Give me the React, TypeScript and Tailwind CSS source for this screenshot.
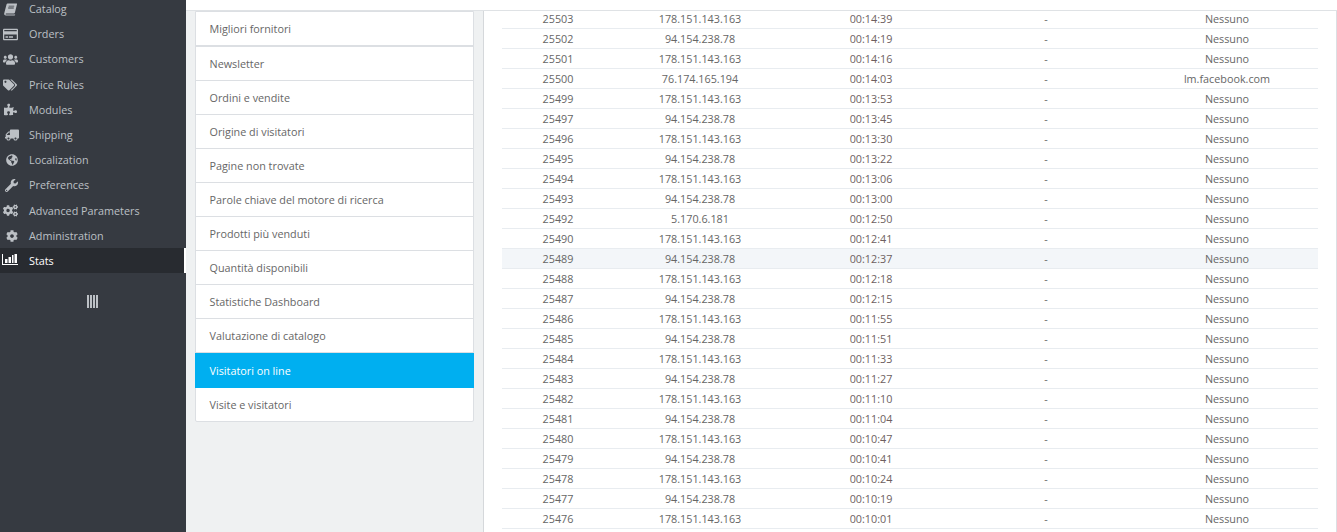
import React from 'react';
import {
  FaRegCreditCard,
  FaUsers,
  FaTags,
  FaPuzzlePiece,
  FaTruck,
  FaGlobeAmericas,
  FaWrench,
  FaCogs,
  FaCog,
} from 'react-icons/fa';

// FontAwesome 4 shapes that the icon package doesn't have
const BookIcon = ({ className }: { className?: string }) => (
  <svg viewBox="0 0 14 13" className={className} fill="currentColor">
    <path d="M4 0h9.4c.5 0 .7.4.6.8l-2.3 9.2c-.1.5-.5.8-1 .8H2.3c-.5 0-.7.5-.5.9.1.2.3.3.6.3h8.8l.9-.5-.4 1.1c-.1.3-.3.4-.6.4H2C.9 13 0 12 .2 10.8L2.7 1C2.9.4 3.4 0 4 0zm1 2.4v.9h6v-.9H5zm-.5 2v.9h6v-.9h-6z" />
  </svg>
);

const ChartIcon = ({ className }: { className?: string }) => (
  <svg viewBox="0 0 16 11" className={className} fill="currentColor">
    <path d="M0 0h1v10h15v1H0z" />
    <path d="M3 5h2.5v4H3zM6.5 3H9v6H6.5zM10 1h1.5v8H10zM12.5 0H15v9h-2.5z" />
  </svg>
);

const BarsIcon = ({ className }: { className?: string }) => (
  <svg viewBox="0 0 11 13" className={className} fill="currentColor">
    <path d="M0 0h2v13H0zM3 0h2v13H3zM6 0h2v13H6zM9 0h2v13H9z" />
  </svg>
);

const menu = [
  { label: 'Catalog', icon: BookIcon, iconClass: 'h-[13px] w-[13px] ml-[1px]' },
  { label: 'Orders', icon: FaRegCreditCard, iconClass: 'h-[15px] w-[15px]' },
  { label: 'Customers', icon: FaUsers, iconClass: 'h-[15px] w-[15px]' },
  { label: 'Price Rules', icon: FaTags, iconClass: 'h-[14px] w-[14px]' },
  { label: 'Modules', icon: FaPuzzlePiece, iconClass: 'h-[13px] w-[13px] ml-[1px]' },
  { label: 'Shipping', icon: FaTruck, iconClass: 'h-[14px] w-[14px] ml-[2px] -scale-x-100' },
  { label: 'Localization', icon: FaGlobeAmericas, iconClass: 'h-[12px] w-[12px] ml-[3px]' },
  { label: 'Preferences', icon: FaWrench, iconClass: 'h-[13px] w-[13px] ml-[2px]' },
  { label: 'Advanced Parameters', icon: FaCogs, iconClass: 'h-[15px] w-[15px]' },
  { label: 'Administration', icon: FaCog, iconClass: 'h-[12px] w-[12px] ml-[3px]' },
  { label: 'Stats', icon: ChartIcon, iconClass: 'h-[11px] w-[16px] -ml-[1px] -mt-[2px]', active: true },
];

const modules = [
  'Newsletter',
  'Ordini e vendite',
  'Origine di visitatori',
  'Pagine non trovate',
  'Parole chiave del motore di ricerca',
  'Prodotti più venduti',
  'Quantità disponibili',
  'Statistiche Dashboard',
  'Valutazione di catalogo',
];

const rows = [
  ['25503', '178.151.143.163', '00:14:39', 'Nessuno'],
  ['25502', '94.154.238.78', '00:14:19', 'Nessuno'],
  ['25501', '178.151.143.163', '00:14:16', 'Nessuno'],
  ['25500', '76.174.165.194', '00:14:03', 'lm.facebook.com'],
  ['25499', '178.151.143.163', '00:13:53', 'Nessuno'],
  ['25497', '94.154.238.78', '00:13:45', 'Nessuno'],
  ['25496', '178.151.143.163', '00:13:30', 'Nessuno'],
  ['25495', '94.154.238.78', '00:13:22', 'Nessuno'],
  ['25494', '178.151.143.163', '00:13:06', 'Nessuno'],
  ['25493', '94.154.238.78', '00:13:00', 'Nessuno'],
  ['25492', '5.170.6.181', '00:12:50', 'Nessuno'],
  ['25490', '178.151.143.163', '00:12:41', 'Nessuno'],
  ['25489', '94.154.238.78', '00:12:37', 'Nessuno'],
  ['25488', '178.151.143.163', '00:12:18', 'Nessuno'],
  ['25487', '94.154.238.78', '00:12:15', 'Nessuno'],
  ['25486', '178.151.143.163', '00:11:55', 'Nessuno'],
  ['25485', '94.154.238.78', '00:11:51', 'Nessuno'],
  ['25484', '178.151.143.163', '00:11:33', 'Nessuno'],
  ['25483', '94.154.238.78', '00:11:27', 'Nessuno'],
  ['25482', '178.151.143.163', '00:11:10', 'Nessuno'],
  ['25481', '94.154.238.78', '00:11:04', 'Nessuno'],
  ['25480', '178.151.143.163', '00:10:47', 'Nessuno'],
  ['25479', '94.154.238.78', '00:10:41', 'Nessuno'],
  ['25478', '178.151.143.163', '00:10:24', 'Nessuno'],
  ['25477', '94.154.238.78', '00:10:19', 'Nessuno'],
  ['25476', '178.151.143.163', '00:10:01', 'Nessuno'],
];

const App = () => {
  return (
    <div className="flex h-[532px] w-[1337px] overflow-hidden bg-white font-['Open_Sans',sans-serif] text-[10.8px] leading-[16px] text-[#666]">
      {/* sidebar */}
      <div className="w-[186px] shrink-0 bg-[#363a41] text-[#bcc0c5]">
        <ul className="-mt-[3.6px]">
          {menu.map((item) => (
            <li
              key={item.label}
              className={
                item.active
                  ? 'flex h-[25.2px] items-center border-r-2 border-white bg-[#282b30] text-white'
                  : 'flex h-[25.2px] items-center'
              }
            >
              <span className="flex w-[29px] pl-[3px]">
                <item.icon className={item.iconClass} />
              </span>
              <span>{item.label}</span>
            </li>
          ))}
        </ul>
        <div className="mt-[22px] flex justify-center pr-[1px]">
          <BarsIcon className="h-[13px] w-[11px]" />
        </div>
      </div>

      {/* content */}
      <div className="mt-[10px] flex min-w-0 flex-1 border-t border-[#dfe2e5] bg-[#eff1f2]">
        {/* stats modules */}
        <div className="w-[298px] shrink-0 border-r border-[#d5d8db] pl-[9px]">
          <div className="w-[279px] rounded-b-[2px] border border-[#dcdfe3] bg-white">
            <div className="flex h-[35px] items-center border-b-2 border-[#dcdfe3] pl-[13.5px]">Migliori fornitori</div>
            {modules.map((name) => (
              <div key={name} className="flex h-[34px] items-center border-b border-[#dcdfe3] pl-[13.5px]">
                {name}
              </div>
            ))}
            <div className="-mx-px flex h-[35px] items-center bg-[#00aff0] pl-[14.5px] text-white">Visitatori on line</div>
            <div className="flex h-[33px] items-center pt-[1px] pl-[13.5px]">Visite e visitatori</div>
          </div>
        </div>

        {/* visitors table */}
        <div className="min-w-0 flex-1 border-r border-[#dcdfe3] bg-white px-[18px]">
          <table className="-mt-[3px] w-[816px] table-fixed border-collapse text-center">
            <tbody>
              {rows.map((row) => (
                <tr key={row[0]} className={row[0] === '25489' ? 'h-[20px] border-b border-[#e8ecf0] bg-[#f3f6f9]' : 'h-[20px] border-b border-[#e8ecf0]'}>
                  <td className="w-[112px] p-0 pt-[2px]">{row[0]}</td>
                  <td className="w-[172px] p-0 pt-[2px]">{row[1]}</td>
                  <td className="w-[170px] p-0 pt-[2px] text-[#6e5f5f]">{row[2]}</td>
                  <td className="w-[180px] p-0 pt-[2px]">-</td>
                  <td className="p-0 pt-[2px]">{row[3]}</td>
                </tr>
              ))}
            </tbody>
          </table>
        </div>
      </div>
    </div>
  );
};

export default App;
